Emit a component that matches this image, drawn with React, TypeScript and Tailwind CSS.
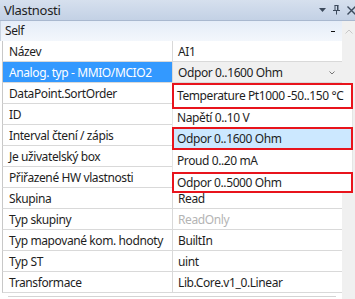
import React from "react";

const rows: { label: string; value: string; dim?: boolean; selected?: boolean }[] = [
  { label: "Název", value: "AI1" },
  { label: "Analog. typ - MMIO/MCIO2", value: "Odpor 0..1600 Ohm", selected: true },
  { label: "DataPoint.SortOrder", value: "" },
  { label: "ID", value: "" },
  { label: "Interval čtení / zápis", value: "" },
  { label: "Je uživatelský box", value: "" },
  { label: "Přiřazené HW vlastnosti", value: "" },
  { label: "Skupina", value: "Read" },
  { label: "Typ skupiny", value: "ReadOnly", dim: true },
  { label: "Typ mapované kom. hodnoty", value: "BuiltIn" },
  { label: "Typ ST", value: "uint" },
  { label: "Transformace", value: "Lib.Core.v1_0.Linear" },
];

const items: { text: string; cls: string }[] = [
  { text: "Temperature Pt1000 -50..150 °C", cls: "h-[26px] border-2 border-[#e8141c] pl-[3px]" },
  { text: "Napětí 0..10 V", cls: "h-[18px] border-x border-[#e5e5e5] pl-[4px]" },
  { text: "Odpor 0..1600 Ohm", cls: "h-[23px] border-2 border-[#e8141c] pl-[3px] bg-[#cce8ff]" },
  { text: "Proud 0..20 mA", cls: "h-[22px] border-x border-[#e5e5e5] pl-[4px]" },
  { text: "Odpor 0..5000 Ohm", cls: "h-[21px] border-2 border-[#e8141c] pl-[3px]" },
];

export default function App() {
  return (
    <div
      className="relative w-[355px] h-[299px] overflow-hidden bg-white text-[12px] tracking-[-0.4px] text-[#1e1e1e] flex flex-col"
      style={{ fontFamily: '"Segoe UI", "Noto Sans", sans-serif' }}
    >
      {/* title bar */}
      <div className="h-[21px] shrink-0 flex items-center pl-[4px] bg-gradient-to-b from-[#d6e0ee] to-[#c3d1e5] border-b border-[#a9b8cf]">
        <span className="flex-1 leading-none text-[13px] tracking-[-0.3px]">Vlastnosti</span>
        <div className="flex items-center gap-[7px]">
          <svg width="7" height="4" viewBox="0 0 7 4"><path d="M0 0h7L3.5 4z" fill="#3c4a5c" /></svg>
          <svg width="7" height="10" viewBox="0 0 7 10">
            <path d="M1.5 0.5h4M2 0.5v5M5 0.5v5M4.5 0.5v5M0 5.5h7M3.5 5.5v4" stroke="#3c4a5c" strokeWidth="1" fill="none" />
          </svg>
          <svg width="8" height="9" viewBox="0 0 8 9"><path d="M0.5 0.5l8 8M8.5 0.5l-8 8" stroke="#3c4a5c" strokeWidth="1.4" /></svg>
        </div>
      </div>
      <div className="flex flex-1 min-h-0">
        {/* grid */}
        <div className="w-[342px] flex flex-col">
          <div className="h-[20px] flex items-center pl-[4px] bg-gradient-to-b from-[#e5edf8] to-[#f3f7fc] border-l border-[#c9d3e0]">
            <span className="flex-1">Self</span>
            <span className="w-[4px] h-[1px] bg-[#111] mr-[7px]" />
          </div>
          {rows.map((r, i) => (
            <div key={i} className="h-[21px] flex border-b border-[#d9d9d9] ml-[2px] border-l border-l-[#c8c8c8]">
              <div
                className={
                  "w-[170px] flex items-center pl-[6px] pt-[1px] whitespace-nowrap border-r border-[#d9d9d9] " +
                  (r.selected ? "bg-[#3399ff] text-white" : "")
                }
              >
                {r.label}
              </div>
              <div
                className={
                  "flex-1 flex items-center pl-[5px] pt-[1px] whitespace-nowrap " +
                  (r.selected ? "bg-[#f0f0f0]" : "") +
                  (r.dim ? " text-[#b4b4b4]" : "")
                }
              >
                <span className="flex-1">{r.value}</span>
                {r.selected && (
                  <svg width="6" height="4" viewBox="0 0 6 4" className="mr-[7px]">
                    <path d="M0.5 0.5l2.5 2.5 2.5-2.5" stroke="#777" fill="none" />
                  </svg>
                )}
              </div>
            </div>
          ))}
          <div className="mt-[3px] ml-[8px] w-[328px] h-[1px] bg-[#d4d4d4]" />
        </div>
        {/* vertical scrollbar */}
        <div className="flex-1 bg-[#f0f0f0] flex flex-col items-center pt-[8px]">
          <svg width="8" height="5" viewBox="0 0 8 5">
            <path d="M0.5 4.5l3.5-3.5 3.5 3.5" stroke="#c8c8c8" fill="none" />
          </svg>
        </div>
      </div>
      {/* dropdown */}
      <div className="absolute left-[172px] top-[83px] w-[181px] bg-white flex flex-col">
        {items.map((it, i) => (
          <div key={i} className={"flex items-center whitespace-nowrap " + it.cls}>
            {it.text}
          </div>
        ))}
      </div>
    </div>
  );
}
